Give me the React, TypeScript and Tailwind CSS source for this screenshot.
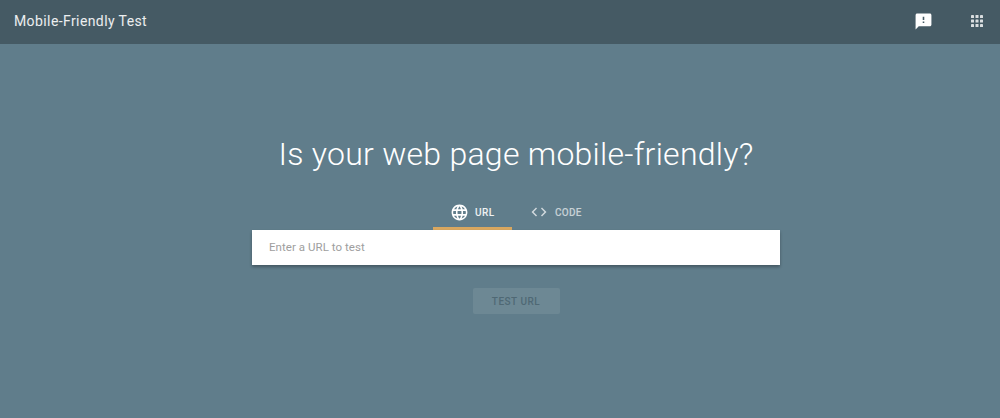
function GridIcon() {
  const dots = [];
  for (let row = 0; row < 3; row++) {
    for (let col = 0; col < 3; col++) {
      dots.push(<rect key={`${row}-${col}`} x={4 + col * 6} y={4 + row * 6} width="4" height="4" rx="0.5" fill="currentColor" />);
    }
  }
  return (
    <svg width="18" height="18" viewBox="0 0 24 24" className="text-white/80">
      {dots}
    </svg>
  );
}

function FeedbackIcon() {
  return (
    <svg width="19" height="19" viewBox="0 0 24 24" fill="#fff">
      <path d="M20 2H4c-1.1 0-1.99.9-1.99 2L2 22l4-4h14c1.1 0 2-.9 2-2V4c0-1.1-.9-2-2-2zm-7 12h-2v-2h2v2zm0-4h-2V6h2v4z" />
    </svg>
  );
}

function GlobeIcon() {
  return (
    <svg width="19" height="19" viewBox="0 0 24 24" fill="#fff">
      <path d="M11.99 2C6.47 2 2 6.48 2 12s4.47 10 9.99 10C17.52 22 22 17.52 22 12S17.52 2 11.99 2zm6.93 6h-2.95c-.32-1.25-.78-2.45-1.38-3.56 1.84.63 3.37 1.91 4.33 3.56zM12 4.04c.83 1.2 1.48 2.53 1.91 3.96h-3.82c.43-1.43 1.08-2.76 1.91-3.96zM4.26 14C4.1 13.36 4 12.69 4 12s.1-1.36.26-2h3.38c-.08.66-.14 1.32-.14 2 0 .68.06 1.34.14 2H4.26zm.82 2h2.95c.32 1.25.78 2.45 1.38 3.56-1.84-.63-3.37-1.9-4.33-3.56zm2.95-8H5.08c.96-1.66 2.49-2.93 4.33-3.56C8.81 5.55 8.35 6.75 8.03 8zM12 19.96c-.83-1.2-1.48-2.53-1.91-3.96h3.82c-.43 1.43-1.08 2.76-1.91 3.96zM14.34 14H9.66c-.09-.66-.16-1.32-.16-2 0-.68.07-1.35.16-2h4.68c.09.65.16 1.32.16 2 0 .68-.07 1.34-.16 2zm.25 5.56c.6-1.11 1.06-2.31 1.38-3.56h2.95c-.96 1.65-2.49 2.93-4.33 3.56zM16.36 14c.08-.66.14-1.32.14-2 0-.68-.06-1.34-.14-2h3.38c.16.64.26 1.31.26 2s-.1 1.36-.26 2h-3.38z" />
    </svg>
  );
}

function CodeIcon() {
  return (
    <svg width="18" height="18" viewBox="0 0 24 24" fill="#fff" fillOpacity="0.7">
      <path d="M9.4 16.6 4.8 12l4.6-4.6L8 6l-6 6 6 6 1.4-1.4zm5.2 0 4.6-4.6-4.6-4.6L16 6l6 6-6 6-1.4-1.4z" />
    </svg>
  );
}

export default function App() {
  return (
    <div className="h-[418px] w-[1000px] overflow-hidden bg-[#607d8b] font-['Roboto',sans-serif]">
      {/* Header */}
      <header className="flex h-11 items-center justify-between bg-[#455a64] pb-[2px] pl-3.5 pr-3.5">
        <span className="text-[14px] tracking-[0.4px] text-white/90">Mobile-Friendly Test</span>
        <div className="flex items-center gap-[35px]">
          <FeedbackIcon />
          <GridIcon />
        </div>
      </header>

      {/* Content */}
      <main className="flex flex-col items-center pl-[32px]">
        <h1 className="mt-[87px] text-[32px] leading-[46px] font-light tracking-[0.26px] text-white">
          Is your web page mobile-friendly?
        </h1>

        <div className="mt-[21px] flex h-[32px] items-stretch self-start pl-[401px]">
          <div className="flex w-[79px] items-center gap-[6px] border-b-[3px] border-[#d9a75f] pl-[17px] pb-[1px]">
            <GlobeIcon />
            <span className="text-[10px] font-medium tracking-[0.4px] text-white/90">URL</span>
          </div>
          <div className="ml-[18px] flex items-center gap-[7px] pb-[4px]">
            <CodeIcon />
            <span className="text-[10px] font-medium tracking-[0.3px] text-white/65">CODE</span>
          </div>
        </div>

        <div className="flex h-[35px] w-[528px] items-center bg-white pl-[17px] shadow-[0_2px_3px_rgba(0,0,0,0.3)]">
          <span className="text-[11.5px] tracking-[0.05px] text-[#9e9e9e]">Enter a URL to test</span>
        </div>

        <button className="mt-[23px] flex h-[26px] w-[87px] items-center justify-center rounded-[2px] bg-[#6d8894] text-[10px] font-medium tracking-[0.5px] text-[#4f6874]">
          TEST URL
        </button>
      </main>
    </div>
  );
}
